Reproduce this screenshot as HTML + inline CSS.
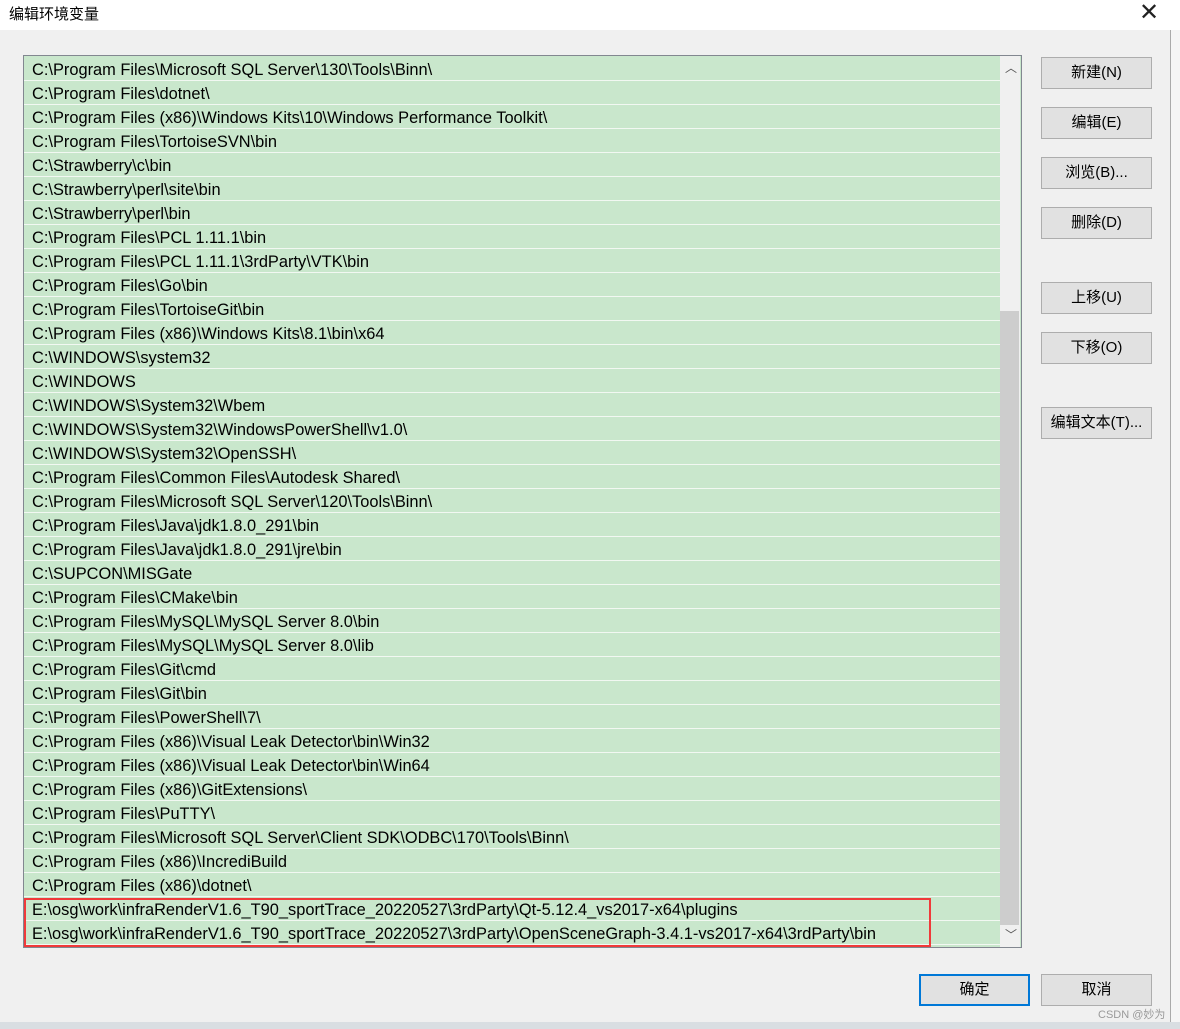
<!DOCTYPE html>
<html><head><meta charset="utf-8"><style>
*{margin:0;padding:0;box-sizing:border-box}
html,body{width:1180px;height:1029px;overflow:hidden}
body{background:#f0f0f0;font-family:"Liberation Sans","Noto Sans CJK SC",sans-serif;position:relative}
.title{position:absolute;left:0;top:0;width:1180px;height:30px;background:#fff;font-size:15px;color:#000}
.title span{position:absolute;left:9px;top:3px}
.x{position:absolute;left:1139px;top:-2px;font-size:24px;font-weight:100;color:#222;font-family:"DejaVu Sans",sans-serif}
.list{position:absolute;left:23px;top:55px;width:999px;height:893px;border:1px solid #828790;background:#c9e7cc}
.row{position:absolute;left:0;width:976px;height:23px;border-bottom:1px solid #f2f8f2;font-size:16.4px;line-height:25px;padding-left:8px;color:#000;white-space:nowrap}
.sb{position:absolute;left:976px;top:0;width:20px;height:891px;background:#f0f0f0}
.thumb{position:absolute;left:0;top:255px;width:19px;height:614px;background:#cdcdcd}
.btn{position:absolute;width:111px;height:32px;background:#e1e1e1;border:1px solid #adadad;font-size:15px;text-align:center;line-height:30px}
.red{position:absolute;left:24px;top:898px;width:907px;height:49px;border:2px solid #f03a3a}
</style></head><body>
<div class="title"><span>编辑环境变量</span><div class="x">✕</div></div>
<div class="list" id="l">
<div class="sb"><div style="position:absolute;left:5px;top:3px;font-size:12px;color:#555">︿</div><div class="thumb"></div><div style="position:absolute;left:5px;top:870px;font-size:12px;color:#555">﹀</div></div>
</div>
<div class="red"></div>
<div style="position:absolute;left:1170px;top:30px;width:10px;height:992px;background:#f5f5f5;border-left:1px solid #aaa"></div>
<div style="position:absolute;left:0;top:1022px;width:1180px;height:7px;background:#d9dee2"></div>
<div class="btn" style="left:1041px;top:57px">新建(N)</div>
<div class="btn" style="left:1041px;top:107px">编辑(E)</div>
<div class="btn" style="left:1041px;top:157px">浏览(B)...</div>
<div class="btn" style="left:1041px;top:207px">删除(D)</div>
<div class="btn" style="left:1041px;top:282px">上移(U)</div>
<div class="btn" style="left:1041px;top:332px">下移(O)</div>
<div class="btn" style="left:1041px;top:407px">编辑文本(T)...</div>
<div class="btn" style="left:919px;top:974px;border:2px solid #0078d7;line-height:28px">确定</div>
<div class="btn" style="left:1041px;top:974px">取消</div>
<div style="position:absolute;left:1098px;top:1006px;font-size:11px;color:#999">CSDN @妙为</div>
<script>
var r=["C:\\Program Files\\Microsoft SQL Server\\130\\Tools\\Binn\\","C:\\Program Files\\dotnet\\","C:\\Program Files (x86)\\Windows Kits\\10\\Windows Performance Toolkit\\","C:\\Program Files\\TortoiseSVN\\bin","C:\\Strawberry\\c\\bin","C:\\Strawberry\\perl\\site\\bin","C:\\Strawberry\\perl\\bin","C:\\Program Files\\PCL 1.11.1\\bin","C:\\Program Files\\PCL 1.11.1\\3rdParty\\VTK\\bin","C:\\Program Files\\Go\\bin","C:\\Program Files\\TortoiseGit\\bin","C:\\Program Files (x86)\\Windows Kits\\8.1\\bin\\x64","C:\\WINDOWS\\system32","C:\\WINDOWS","C:\\WINDOWS\\System32\\Wbem","C:\\WINDOWS\\System32\\WindowsPowerShell\\v1.0\\","C:\\WINDOWS\\System32\\OpenSSH\\","C:\\Program Files\\Common Files\\Autodesk Shared\\","C:\\Program Files\\Microsoft SQL Server\\120\\Tools\\Binn\\","C:\\Program Files\\Java\\jdk1.8.0_291\\bin","C:\\Program Files\\Java\\jdk1.8.0_291\\jre\\bin","C:\\SUPCON\\MISGate","C:\\Program Files\\CMake\\bin","C:\\Program Files\\MySQL\\MySQL Server 8.0\\bin","C:\\Program Files\\MySQL\\MySQL Server 8.0\\lib","C:\\Program Files\\Git\\cmd","C:\\Program Files\\Git\\bin","C:\\Program Files\\PowerShell\\7\\","C:\\Program Files (x86)\\Visual Leak Detector\\bin\\Win32","C:\\Program Files (x86)\\Visual Leak Detector\\bin\\Win64","C:\\Program Files (x86)\\GitExtensions\\","C:\\Program Files\\PuTTY\\","C:\\Program Files\\Microsoft SQL Server\\Client SDK\\ODBC\\170\\Tools\\Binn\\","C:\\Program Files (x86)\\IncrediBuild","C:\\Program Files (x86)\\dotnet\\","E:\\osg\\work\\infraRenderV1.6_T90_sportTrace_20220527\\3rdParty\\Qt-5.12.4_vs2017-x64\\plugins","E:\\osg\\work\\infraRenderV1.6_T90_sportTrace_20220527\\3rdParty\\OpenSceneGraph-3.4.1-vs2017-x64\\3rdParty\\bin"];
var l=document.getElementById('l');
r.forEach(function(t,i){var d=document.createElement('div');d.className='row';d.style.top=(2+24*i)+'px';d.textContent=t;l.appendChild(d);});
</script>
</body></html>
